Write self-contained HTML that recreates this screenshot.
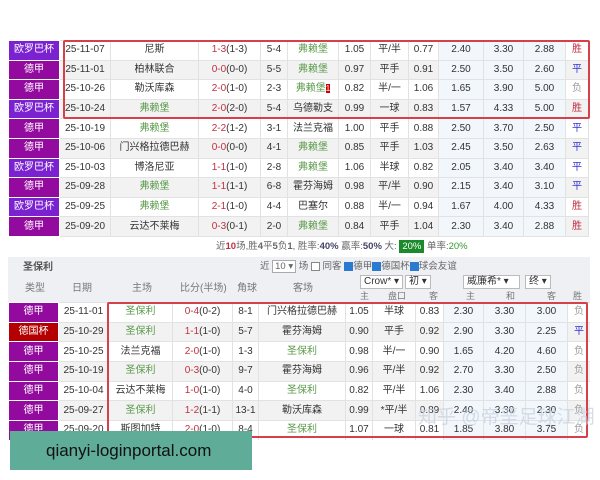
<!DOCTYPE html>
<html><head><meta charset="utf-8"><style>
*{margin:0;padding:0;box-sizing:border-box}
body{width:600px;height:480px;background:#fff;position:relative;overflow:hidden;font-family:"Liberation Sans","Noto Sans CJK SC",sans-serif;color:#333;font-size:10px}
table{border-collapse:collapse;table-layout:fixed;position:absolute}
td{text-align:center;white-space:nowrap;overflow:hidden;border:1px solid #e2e2e2;padding:0;line-height:12px;vertical-align:middle}
.t1 td{height:19.6px}
.t2 td{height:19.7px}
tr:nth-child(even) td{background:#f2f2f2}
tr td{background:#fff}
td.o{background:#f2f7fc!important}
td.ty{color:#fff;border-color:#fff}
.e{background:#7a22d0!important}.d{background:#930b9e!important}.c{background:#b40000!important}
.g{color:#5a9a4a}.r{color:#c03040}
.rd{position:absolute;border:2px solid #d6404a;border-radius:2px}
.h span{position:absolute;line-height:12px}
</style></head><body>
<table class="t1" style="left:8px;top:40px;width:580px">
<colgroup><col style="width:51px"><col style="width:51px"><col style="width:88px"><col style="width:62px"><col style="width:27px"><col style="width:51px"><col style="width:32px"><col style="width:38px"><col style="width:30px"><col style="width:45px"><col style="width:40px"><col style="width:42px"><col style="width:23px"></colgroup>
<tr><td class="ty e">欧罗巴杯</td><td>25-11-07</td><td>尼斯</td><td><span class="r">1-3</span>(1-3)</td><td>5-4</td><td class="g">弗赖堡</td><td>1.05</td><td>平/半</td><td>0.77</td><td class="o">2.40</td><td class="o">3.30</td><td class="o">2.88</td><td class="r">胜</td></tr>
<tr><td class="ty d">德甲</td><td>25-11-01</td><td>柏林联合</td><td><span class="r">0-0</span>(0-0)</td><td>5-5</td><td class="g">弗赖堡</td><td>0.97</td><td>平手</td><td>0.91</td><td class="o">2.50</td><td class="o">3.50</td><td class="o">2.60</td><td style="color:#33c">平</td></tr>
<tr><td class="ty d">德甲</td><td>25-10-26</td><td>勒沃库森</td><td><span class="r">2-0</span>(1-0)</td><td>2-3</td><td class="g">弗赖堡<span style="background:#c00;color:#fff;font-size:8px">1</span></td><td>0.82</td><td>半/一</td><td>1.06</td><td class="o">1.65</td><td class="o">3.90</td><td class="o">5.00</td><td style="color:#999">负</td></tr>
<tr><td class="ty e">欧罗巴杯</td><td>25-10-24</td><td class="g">弗赖堡</td><td><span class="r">2-0</span>(2-0)</td><td>5-4</td><td>乌德勒支</td><td>0.99</td><td>一球</td><td>0.83</td><td class="o">1.57</td><td class="o">4.33</td><td class="o">5.00</td><td class="r">胜</td></tr>
<tr><td class="ty d">德甲</td><td>25-10-19</td><td class="g">弗赖堡</td><td><span class="r">2-2</span>(1-2)</td><td>3-1</td><td>法兰克福</td><td>1.00</td><td>平手</td><td>0.88</td><td class="o">2.50</td><td class="o">3.70</td><td class="o">2.50</td><td style="color:#33c">平</td></tr>
<tr><td class="ty d">德甲</td><td>25-10-06</td><td>门兴格拉德巴赫</td><td><span class="r">0-0</span>(0-0)</td><td>4-1</td><td class="g">弗赖堡</td><td>0.85</td><td>平手</td><td>1.03</td><td class="o">2.45</td><td class="o">3.50</td><td class="o">2.63</td><td style="color:#33c">平</td></tr>
<tr><td class="ty e">欧罗巴杯</td><td>25-10-03</td><td>博洛尼亚</td><td><span class="r">1-1</span>(1-0)</td><td>2-8</td><td class="g">弗赖堡</td><td>1.06</td><td>半球</td><td>0.82</td><td class="o">2.05</td><td class="o">3.40</td><td class="o">3.40</td><td style="color:#33c">平</td></tr>
<tr><td class="ty d">德甲</td><td>25-09-28</td><td class="g">弗赖堡</td><td><span class="r">1-1</span>(1-1)</td><td>6-8</td><td>霍芬海姆</td><td>0.98</td><td>平/半</td><td>0.90</td><td class="o">2.15</td><td class="o">3.40</td><td class="o">3.10</td><td style="color:#33c">平</td></tr>
<tr><td class="ty e">欧罗巴杯</td><td>25-09-25</td><td class="g">弗赖堡</td><td><span class="r">2-1</span>(1-0)</td><td>4-4</td><td>巴塞尔</td><td>0.88</td><td>半/一</td><td>0.94</td><td class="o">1.67</td><td class="o">4.00</td><td class="o">4.33</td><td class="r">胜</td></tr>
<tr><td class="ty d">德甲</td><td>25-09-20</td><td>云达不莱梅</td><td><span class="r">0-3</span>(0-1)</td><td>2-0</td><td class="g">弗赖堡</td><td>0.84</td><td>平手</td><td>1.04</td><td class="o">2.30</td><td class="o">3.40</td><td class="o">2.88</td><td class="r">胜</td></tr>
</table>
<div class="rd" style="left:63px;top:40px;width:527px;height:79px"></div>
<div style="position:absolute;left:216px;top:241px;font-size:9.5px;line-height:12px;color:#666;white-space:nowrap">近<b style="color:#c03040">10</b>场,胜<b>4</b>平<b>5</b>负<b>1</b>, 胜率:<b style="color:#446">40%</b> 赢率:<b style="color:#446">50%</b> 大: <span style="background:#1a8a2a;color:#fff;padding:1px 3px">20%</span> 单率:<span style="color:#393">20%</span></div>
<div style="position:absolute;left:8px;top:257px;width:582px;height:45px;background:#eef0f4"></div>
<div style="position:absolute;left:23px;top:262px;font-size:10px;line-height:12px;font-weight:bold;color:#555">圣保利</div>
<div style="position:absolute;left:260px;top:261px;font-size:9.5px;line-height:12px;color:#666;white-space:nowrap">近 <span style="border:1px solid #aaa;background:#fff;padding:0 2px">10 ▾</span> 场 <span style="display:inline-block;width:9px;height:9px;border:1px solid #888;background:#fff;vertical-align:middle"></span> 同客 <span style="display:inline-block;width:9px;height:9px;background:#2a7ad0;vertical-align:middle"></span>德甲<span style="display:inline-block;width:9px;height:9px;background:#2a7ad0;vertical-align:middle"></span>德国杯<span style="display:inline-block;width:9px;height:9px;background:#2a7ad0;vertical-align:middle"></span>球会友谊</div>
<div class="h" style="position:absolute;top:275px;left:8px;width:582px;height:27px;font-size:10px;color:#777">
<span style="left:17px;top:8px">类型</span><span style="left:64px;top:8px">日期</span><span style="left:124px;top:8px">主场</span><span style="left:172px;top:8px">比分(半场)</span><span style="left:229px;top:8px">角球</span><span style="left:285px;top:8px">客场</span>
<span style="left:352px;top:0px;border:1px solid #bbb;background:#fff;padding:0 3px;color:#333">Crow* ▾</span><span style="left:397px;top:0px;border:1px solid #bbb;background:#fff;padding:0 3px;color:#333">初 ▾</span>
<span style="left:455px;top:0px;width:57px;border:1px solid #bbb;background:#fff;padding:0 3px;color:#333">威廉希* ▾</span><span style="left:517px;top:0px;border:1px solid #bbb;background:#fff;padding:0 3px;color:#333">终 ▾</span>
<span style="left:352px;top:15px;font-size:9px">主</span><span style="left:380px;top:15px;font-size:9px">盘口</span><span style="left:421px;top:15px;font-size:9px">客</span><span style="left:458px;top:15px;font-size:9px">主</span><span style="left:498px;top:15px;font-size:9px">和</span><span style="left:539px;top:15px;font-size:9px">客</span><span style="left:565px;top:15px;font-size:9px">胜负</span>
</div>
<div style="position:absolute;left:8px;top:302px;width:582px;height:138px;overflow:hidden">
<table class="t2" style="left:0;top:0;width:582px">
<colgroup><col style="width:50px"><col style="width:50px"><col style="width:64px"><col style="width:60px"><col style="width:26px"><col style="width:87px"><col style="width:27px"><col style="width:43px"><col style="width:28px"><col style="width:40px"><col style="width:42px"><col style="width:42px"><col style="width:23px"></colgroup>
<tr><td class="ty d">德甲</td><td>25-11-01</td><td class="g">圣保利</td><td><span class="r">0-4</span>(0-2)</td><td>8-1</td><td>门兴格拉德巴赫</td><td>1.05</td><td>半球</td><td>0.83</td><td class="o">2.30</td><td class="o">3.30</td><td class="o">3.00</td><td style="color:#999">负</td></tr>
<tr><td class="ty c">德国杯</td><td>25-10-29</td><td class="g">圣保利</td><td><span class="r">1-1</span>(1-0)</td><td>5-7</td><td>霍芬海姆</td><td>0.90</td><td>平手</td><td>0.92</td><td class="o">2.90</td><td class="o">3.30</td><td class="o">2.25</td><td style="color:#33c">平</td></tr>
<tr><td class="ty d">德甲</td><td>25-10-25</td><td>法兰克福</td><td><span class="r">2-0</span>(1-0)</td><td>1-3</td><td class="g">圣保利</td><td>0.98</td><td>半/一</td><td>0.90</td><td class="o">1.65</td><td class="o">4.20</td><td class="o">4.60</td><td style="color:#999">负</td></tr>
<tr><td class="ty d">德甲</td><td>25-10-19</td><td class="g">圣保利</td><td><span class="r">0-3</span>(0-0)</td><td>9-7</td><td>霍芬海姆</td><td>0.96</td><td>平/半</td><td>0.92</td><td class="o">2.70</td><td class="o">3.30</td><td class="o">2.50</td><td style="color:#999">负</td></tr>
<tr><td class="ty d">德甲</td><td>25-10-04</td><td>云达不莱梅</td><td><span class="r">1-0</span>(1-0)</td><td>4-0</td><td class="g">圣保利</td><td>0.82</td><td>平/半</td><td>1.06</td><td class="o">2.30</td><td class="o">3.40</td><td class="o">2.88</td><td style="color:#999">负</td></tr>
<tr><td class="ty d">德甲</td><td>25-09-27</td><td class="g">圣保利</td><td><span class="r">1-2</span>(1-1)</td><td>13-1</td><td>勒沃库森</td><td>0.99</td><td>*平/半</td><td>0.89</td><td class="o">2.40</td><td class="o">3.30</td><td class="o">2.30</td><td style="color:#999">负</td></tr>
<tr><td class="ty d">德甲</td><td>25-09-20</td><td>斯图加特</td><td><span class="r">2-0</span>(1-0)</td><td>8-4</td><td class="g">圣保利</td><td>1.07</td><td>一球</td><td>0.81</td><td class="o">1.85</td><td class="o">3.80</td><td class="o">3.75</td><td style="color:#999">负</td></tr>
</table></div>
<div class="rd" style="left:107px;top:302px;width:481px;height:136px"></div>
<div style="position:absolute;left:418px;top:406px;font-size:19px;line-height:24px;color:rgba(200,210,225,0.75);white-space:nowrap">知乎 @帝垩足球江湖</div>
<div style="position:absolute;left:10px;top:431px;width:242px;height:39px;background:#5fac98;color:#111;font-size:17px;line-height:39px;padding-left:36px">qianyi-loginportal.com</div>
</body></html>
